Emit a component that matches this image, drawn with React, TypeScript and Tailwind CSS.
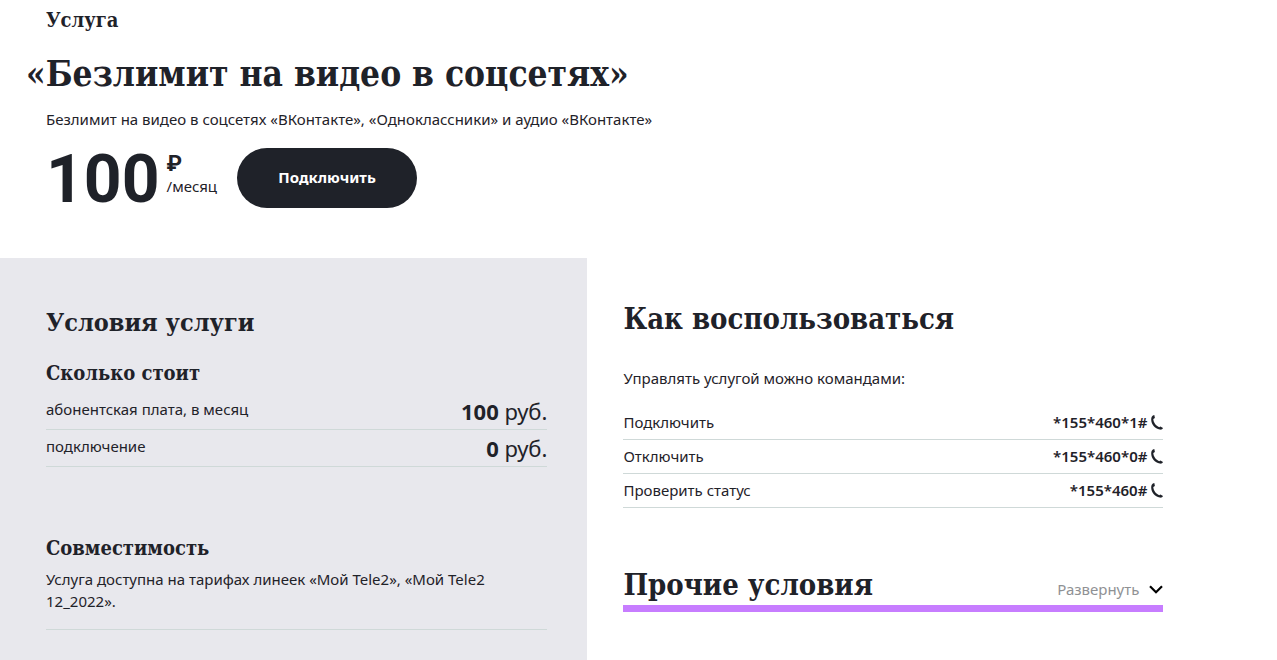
import React from 'react';

const slab = "font-['DejaVu_Serif_Condensed','DejaVu_Serif',serif] font-bold";

const prices = [
  { name: 'абонентская плата, в месяц', value: '100' },
  { name: 'подключение', value: '0' },
];

const commands = [
  { name: 'Подключить', code: '*155*460*1#' },
  { name: 'Отключить', code: '*155*460*0#' },
  { name: 'Проверить статус', code: '*155*460#' },
];

function PhoneIcon() {
  return (
    <svg viewBox="0 0 12 15" className="h-[15px] w-3 shrink-0" fill="currentColor" aria-hidden="true">
      <path d="M1.9 0.4 L3.3 0.1 L3.9 3.1 L2.3 4.1 C2.5 7.8 5 10.9 8.2 12.2 L9.4 11.4 L12 13 C11.4 14.4 10.2 15 8.8 14.6 C3.8 13.4 0.2 9.4 0.2 4.4 C0.2 2.6 0.8 1.1 1.9 0.4 Z" />
    </svg>
  );
}

function ChevronIcon() {
  return (
    <svg viewBox="0 0 14 9" className="h-[9px] w-3.5" fill="none" stroke="#000" strokeWidth="2.2" aria-hidden="true">
      <path d="M1 1.2 L7 7.2 L13 1.2" />
    </svg>
  );
}

function Price({ value }: { value: string }) {
  return (
    <td className="p-0 text-right text-[22px]">
      <b>{value}</b> руб.
    </td>
  );
}

export default function App() {
  return (
    <main className="bg-white font-['Noto_Sans',sans-serif] text-[15px] leading-[22px] text-[#1f2229]">
      <header className="px-[46px] pt-2 pb-[50px]">
        <p className={`${slab} text-[20px] leading-6`}>Услуга</p>
        <h1 className={`${slab} mt-4 -ml-5 text-[35px] leading-[52px]`}>«Безлимит на видео в соцсетях»</h1>
        <p className="mt-2">Безлимит на видео в соцсетях «ВКонтакте», «Одноклассники» и аудио «ВКонтакте»</p>
        <div className="mt-[18px] flex h-[60px] items-center">
          <span className="pt-1 font-['Roboto',sans-serif] text-[66px] leading-[60px] font-bold">100</span>
          <span className="ml-[7px] flex flex-col pb-2">
            <b className="font-['Roboto',sans-serif] text-[22px] leading-6">₽</b>
            <span className="leading-5">/месяц</span>
          </span>
          <button type="button" className="ml-5 h-[60px] w-[180px] rounded-full bg-[#1f2229] pb-0.5 font-bold text-white">
            Подключить
          </button>
        </div>
      </header>

      <div className="flex">
        <section className="w-[46%] bg-[#e8e8ed] pt-[47px] pr-10 pb-[30px] pl-[46px]">
          <h2 className={`${slab} text-[25px] leading-9`}>Условия услуги</h2>
          <h3 className={`${slab} mt-5 text-[20px] leading-6`}>Сколько стоит</h3>
          <table className="mt-2 w-full">
            <tbody>
              {prices.map((row) => (
                <tr key={row.name} className="border-b border-[#cfd9d8] leading-9">
                  <th scope="row" className="p-0 pb-1 text-left leading-8 font-normal">{row.name}</th>
                  <Price value={row.value} />
                </tr>
              ))}
            </tbody>
          </table>
          <h3 className={`${slab} mt-[69px] text-[20px] leading-6`}>Совместимость</h3>
          <div className="mt-2 border-b border-[#cfd9d8] pb-[17px]">
            <p className="max-w-[450px]">Услуга доступна на тарифах линеек «Мой Tele2», «Мой Tele2 12_2022».</p>
          </div>
        </section>

        <section className="flex-1 pt-[41px] pr-9 pl-9">
          <div className="max-w-[540px]">
            <h2 className={`${slab} text-[29px] leading-10`}>Как воспользоваться</h2>
            <p className="mt-7">Управлять услугой можно командами:</p>
            <table className="mt-[17px] w-full">
              <tbody>
                {commands.map((row) => (
                  <tr key={row.code} className="border-b border-[#cfd9d8] leading-[33px]">
                    <th scope="row" className="p-0 text-left font-normal">{row.name}</th>
                    <td className="p-0 font-semibold">
                      <span className="flex items-center justify-end gap-1">
                        {row.code}
                        <PhoneIcon />
                      </span>
                    </td>
                  </tr>
                ))}
              </tbody>
            </table>
            <div className="mt-[57px] flex items-center justify-between border-b-[7px] border-[#c77dff]">
              <h2 className={`${slab} text-[29px] leading-10`}>Прочие условия</h2>
              <button type="button" className="flex items-center gap-2.5 pt-2 text-[#8f9194]">
                Развернуть
                <ChevronIcon />
              </button>
            </div>
          </div>
        </section>
      </div>
    </main>
  );
}
